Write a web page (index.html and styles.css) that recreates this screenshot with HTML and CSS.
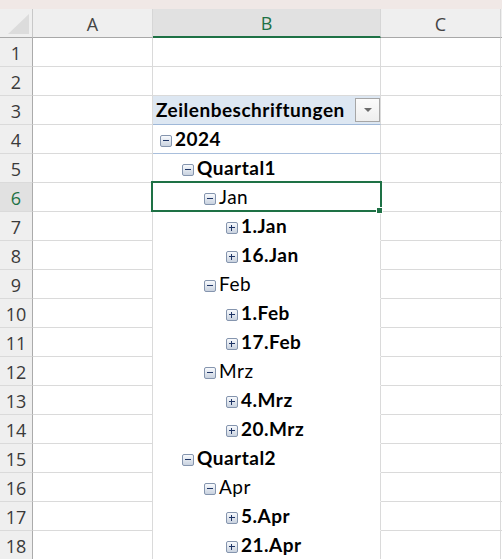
FILE: index.html
```html
<!DOCTYPE html>
<html lang="de">
<head>
<meta charset="utf-8">
<title>Pivot</title>
<link rel="stylesheet" href="styles.css">
</head>
<body>
<div class="topbar"></div>
<div class="sheet">
  <div class="corner"><span class="tri"></span></div>
  <div class="ch">A</div>
  <div class="ch sel">B</div>
  <div class="ch">C</div>
  <div class="ch end"></div>

  <div class="rh">1</div><div class="c"></div><div class="c"></div><div class="c"></div><div class="c end"></div>
  <div class="rh">2</div><div class="c"></div><div class="c"></div><div class="c"></div><div class="c end"></div>
  <div class="rh">3</div><div class="c"></div>
  <div class="c pvh"><span class="b">Zeilenbeschriftungen</span><span class="dd"></span></div>
  <div class="c"></div><div class="c end"></div>

  <div class="rh">4</div><div class="c"></div>
  <div class="c pv lv0 first"><span class="tg minus"></span><span class="b">2024</span></div>
  <div class="c"></div><div class="c end"></div>

  <div class="rh">5</div><div class="c"></div>
  <div class="c pv lv1"><span class="tg minus"></span><span class="b">Quartal1</span></div>
  <div class="c"></div><div class="c end"></div>

  <div class="rh cur">6</div><div class="c"></div>
  <div class="c pv lv2 active"><span class="tg minus"></span><span>Jan</span></div>
  <div class="c"></div><div class="c end"></div>

  <div class="rh">7</div><div class="c"></div>
  <div class="c pv lv3"><span class="tg plus"></span><span class="b">1.Jan</span></div>
  <div class="c"></div><div class="c end"></div>

  <div class="rh">8</div><div class="c"></div>
  <div class="c pv lv3"><span class="tg plus"></span><span class="b">16.Jan</span></div>
  <div class="c"></div><div class="c end"></div>

  <div class="rh">9</div><div class="c"></div>
  <div class="c pv lv2"><span class="tg minus"></span><span>Feb</span></div>
  <div class="c"></div><div class="c end"></div>

  <div class="rh">10</div><div class="c"></div>
  <div class="c pv lv3"><span class="tg plus"></span><span class="b">1.Feb</span></div>
  <div class="c"></div><div class="c end"></div>

  <div class="rh">11</div><div class="c"></div>
  <div class="c pv lv3"><span class="tg plus"></span><span class="b">17.Feb</span></div>
  <div class="c"></div><div class="c end"></div>

  <div class="rh">12</div><div class="c"></div>
  <div class="c pv lv2"><span class="tg minus"></span><span>Mrz</span></div>
  <div class="c"></div><div class="c end"></div>

  <div class="rh">13</div><div class="c"></div>
  <div class="c pv lv3"><span class="tg plus"></span><span class="b">4.Mrz</span></div>
  <div class="c"></div><div class="c end"></div>

  <div class="rh">14</div><div class="c"></div>
  <div class="c pv lv3"><span class="tg plus"></span><span class="b">20.Mrz</span></div>
  <div class="c"></div><div class="c end"></div>

  <div class="rh">15</div><div class="c"></div>
  <div class="c pv lv1"><span class="tg minus"></span><span class="b">Quartal2</span></div>
  <div class="c"></div><div class="c end"></div>

  <div class="rh">16</div><div class="c"></div>
  <div class="c pv lv2"><span class="tg minus"></span><span>Apr</span></div>
  <div class="c"></div><div class="c end"></div>

  <div class="rh">17</div><div class="c"></div>
  <div class="c pv lv3"><span class="tg plus"></span><span class="b">5.Apr</span></div>
  <div class="c"></div><div class="c end"></div>

  <div class="rh">18</div><div class="c"></div>
  <div class="c pv lv3"><span class="tg plus"></span><span class="b">21.Apr</span></div>
  <div class="c"></div><div class="c end"></div>
</div>
</body>
</html>
```

FILE: styles.css
```css
html, body {
  margin: 0;
  padding: 0;
  background: #ffffff;
  overflow: hidden;
}

.topbar {
  height: 9px;
  background: #f0e8e6;
}

.sheet {
  display: grid;
  grid-template-columns: 33px 120px 228px 120px 1fr;
  grid-template-rows: 29px;
  grid-auto-rows: 29px;
}

.sheet > div {
  box-sizing: border-box;
}

.corner {
  background: #efefef;
  border-right: 1px solid #c8c8c8;
  border-bottom: 1px solid #a8a8a8;
  display: flex;
  justify-content: flex-end;
  align-items: flex-end;
  padding: 0 3px 3px 0;
}

.tri {
  width: 21px;
  height: 20px;
  background: #dcdcdc;
  clip-path: polygon(100% 0, 100% 100%, 0 100%);
}

.ch {
  background: #efefef;
  border-right: 1px solid #d6d6d6;
  border-bottom: 1px solid #a8a8a8;
  font-family: "Open Sans", "Noto Sans", sans-serif;
  font-size: 18px;
  color: #444444;
  display: flex;
  align-items: center;
  justify-content: center;
  padding-top: 1px;
}

.ch.sel {
  background: #e1e1e1;
  color: #1e7145;
  border-bottom: 2px solid #1e7145;
}

.ch.end {
  border-right: none;
}

.rh {
  background: #efefef;
  border-right: 1px solid #ababab;
  border-bottom: 1px solid #dadada;
  font-family: "Open Sans", "Noto Sans", sans-serif;
  font-size: 18px;
  color: #3a3a3a;
  display: flex;
  align-items: center;
  justify-content: center;
  padding-top: 1px;
}

.rh.cur {
  background: #e1e1e1;
  color: #1e7145;
}

.c {
  border-right: 1px solid #dadada;
  border-bottom: 1px solid #dadada;
}

.c.end {
  border-right: none;
}

.pvh, .pv {
  font-family: "Lato", "Liberation Sans", sans-serif;
  font-size: 19px;
  letter-spacing: 0.5px;
  color: #000000;
  display: flex;
  align-items: flex-end;
  padding-bottom: 3px;
}

.pvh {
  background: #dde7f2;
  border-bottom: 1px solid #9fb8d8;
  padding-left: 3px;
  padding-right: 0;
  justify-content: space-between;
  padding-bottom: 3px;
}

.pv {
  border-bottom-color: #ffffff;
  gap: 3px;
}

.pv.first {
  border-bottom-color: #a9bfdc;
}

.b {
  font-weight: 700;
}

.lv0 { padding-left: 7px; }
.lv1 { padding-left: 29px; }
.lv2 { padding-left: 51px; }
.lv3 { padding-left: 73px; }

.dd {
  width: 25px;
  height: 24px;
  box-sizing: border-box;
  border: 1px solid #a6a6a6;
  background: linear-gradient(#fbfbfb, #eeeeee);
  display: flex;
  align-items: center;
  justify-content: center;
  align-self: flex-end;
  margin-bottom: -1px;
}

.dd::before {
  content: "";
  width: 0;
  height: 0;
  border-left: 4px solid transparent;
  border-right: 4px solid transparent;
  border-top: 4px solid #6b6b6b;
}

.tg {
  width: 12px;
  height: 12px;
  box-sizing: border-box;
  border: 1px solid #8595ae;
  border-radius: 2px;
  background: linear-gradient(#f8fafd, #c9d2df);
  position: relative;
  flex: none;
  margin-bottom: 3px;
}

.tg::before {
  content: "";
  position: absolute;
  left: 2px;
  right: 2px;
  top: 4px;
  height: 1px;
  background: #1f3566;
}

.tg.plus::after {
  content: "";
  position: absolute;
  top: 2px;
  bottom: 2px;
  left: 4px;
  width: 1px;
  background: #1f3566;
}

.active {
  position: relative;
}

.active::after {
  content: "";
  position: absolute;
  left: -2px;
  top: -2px;
  right: -2px;
  bottom: -1px;
  border: 2px solid #1e7145;
  pointer-events: none;
}

.active::before {
  content: "";
  position: absolute;
  right: -3px;
  bottom: -3px;
  width: 5px;
  height: 5px;
  background: #1e7145;
  border: 1px solid #ffffff;
  z-index: 1;
}
```
